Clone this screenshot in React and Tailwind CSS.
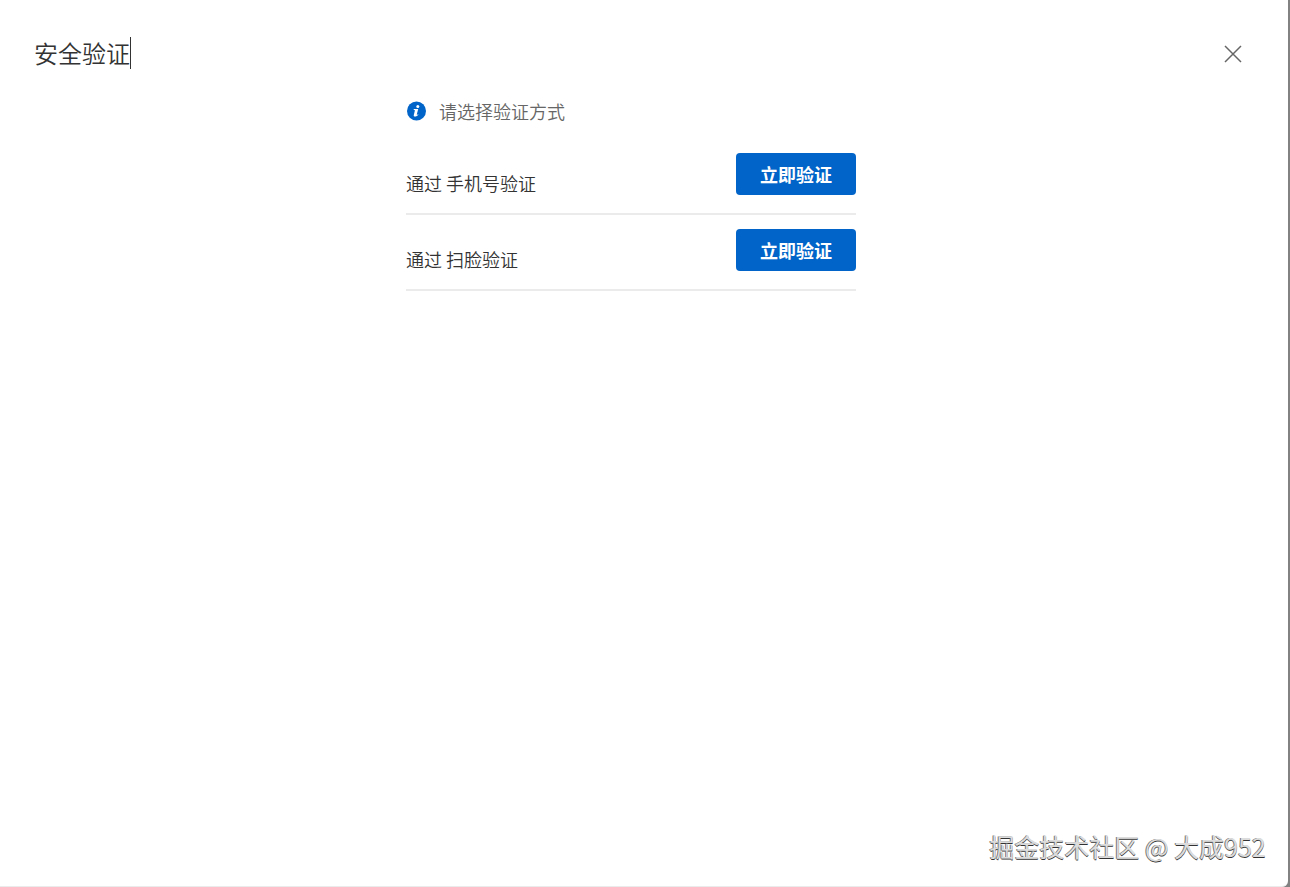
import React, { useState } from 'react';

const METHODS = [
  { id: 'phone', label: '手机号验证' },
  { id: 'face', label: '扫脸验证' },
];

/**
 * InfoIcon — solid blue disc with an italic "i".
 */
function InfoIcon() {
  return (
    <svg width="20" height="20" viewBox="0 0 20 20" className="shrink-0" aria-hidden="true">
      <circle cx="10.5" cy="10" r="9.5" fill="#0064c8" />
      <circle cx="11.8" cy="5.5" r="1.5" fill="white" />
      <path d="M7.8 8.1h4.4l-1.4 5.3c-.1.5.3.5 1.3-.2l.3.5c-1.2 1.2-2.1 1.8-3.2 1.8-1.2 0-1.7-.6-1.4-1.6l1.1-4.3c.1-.5-.2-.7-1.2-.7z" fill="white" />
    </svg>
  );
}

function MethodRow({ method, onVerify }) {
  return (
    <li className="flex items-start justify-between border-b-2 border-[#ebebeb] pt-[14px] pb-[18px]">
      <span className="pt-[18px] text-[18px] leading-6 text-[#333333]">通过 {method.label}</span>
      <button
        type="button"
        onClick={() => onVerify(method.id)}
        className="h-[42px] w-[120px] rounded bg-[#0064c8] font-['Noto_Sans_CJK_SC',sans-serif] text-[18px] font-bold text-white hover:bg-[#0058b0]"
      >
        立即验证
      </button>
    </li>
  );
}

export default function App() {
  const [, setActive] = useState(null);

  return (
    <div className="flex min-h-screen bg-[#828282] pr-[2px] font-['Noto_Sans_CJK_SC_DemiLight','Noto_Sans_CJK_SC',sans-serif]">
      <section className="flex flex-1 flex-col rounded-br-md border-b border-[#ebebeb] bg-white pt-[37px] pr-[60px] pl-[34px]">
        {/* Header */}
        <header className="-mr-[14px] flex items-center justify-between">
          <h1 className="border-r border-[#333333] text-2xl leading-8 font-normal text-[#333333]">安全验证</h1>
          <button type="button" aria-label="关闭" className="pt-[2px] text-[#666666]">
            <svg width="18" height="18" viewBox="0 0 18 18" fill="none" stroke="currentColor" strokeWidth="1.5">
              <path d="M1 1l16 16M17 1L1 17" />
            </svg>
          </button>
        </header>

        {/* Verification methods */}
        <main className="mx-auto w-full max-w-[450px] flex-1 pt-7">
          <p className="flex items-center gap-[13px] text-[18px] leading-7 text-[#666666]">
            <InfoIcon />
            请选择验证方式
          </p>
          <ul className="pt-[14px]">
            {METHODS.map((method) => (
              <MethodRow key={method.id} method={method} onVerify={setActive} />
            ))}
          </ul>
        </main>

        <footer className="-mr-[38px] pb-[22px] text-right font-['Noto_Sans_CJK_SC',sans-serif] text-[25px] leading-9 text-[#dcdcdc] [text-shadow:-1px_0_0_#777,0_1px_0_#333]">
          掘金技术社区 @ 大成952
        </footer>
      </section>
    </div>
  );
}
